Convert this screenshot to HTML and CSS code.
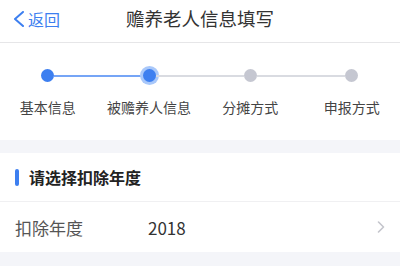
FILE: index.html
```html
<!DOCTYPE html>
<html lang="zh">
<head>
<meta charset="utf-8">
<title>赡养老人信息填写</title>
<link rel="stylesheet" href="styles.css">
</head>
<body>
<div class="page">
  <header class="navbar">
    <div class="back">
      <svg class="back-icon" width="12" height="16" viewBox="0 0 12 16"><polyline points="10,1 2,8 10,15" fill="none" stroke="#3d7ff0" stroke-width="2" stroke-linecap="round" stroke-linejoin="round"/></svg>
      <span>返回</span>
    </div>
    <div class="title">赡养老人信息填写</div>
  </header>

  <section class="steps">
    <div class="step">
      <div class="rail"><i class="seg none"></i><b class="dot active"></b><i class="seg blue"></i></div>
      <div class="label">基本信息</div>
    </div>
    <div class="step">
      <div class="rail"><i class="seg blue"></i><b class="dot current"></b><i class="seg gray"></i></div>
      <div class="label">被赡养人信息</div>
    </div>
    <div class="step">
      <div class="rail"><i class="seg gray"></i><b class="dot"></b><i class="seg gray"></i></div>
      <div class="label">分摊方式</div>
    </div>
    <div class="step">
      <div class="rail"><i class="seg gray"></i><b class="dot"></b><i class="seg none"></i></div>
      <div class="label">申报方式</div>
    </div>
  </section>

  <div class="gap"></div>

  <section class="card">
    <div class="card-title"><span class="bar"></span>请选择扣除年度</div>
    <div class="row">
      <span class="row-label">扣除年度</span>
      <span class="row-value">2018</span>
      <svg class="chev" width="8" height="12" viewBox="0 0 8 12"><polyline points="1.5,1 6.5,6 1.5,11" fill="none" stroke="#c4c5cc" stroke-width="1.6" stroke-linecap="round" stroke-linejoin="round"/></svg>
    </div>
  </section>

  <div class="gap bottom"></div>
</div>
</body>
</html>
```

FILE: styles.css
```css
* { box-sizing: border-box; margin: 0; padding: 0; }
html, body { width: 400px; height: 266px; overflow: hidden; background: #f4f5f9; }
body { font-family: "Noto Sans CJK SC", "Noto Sans", sans-serif; color: #333; }
.page { display: flex; flex-direction: column; }

.navbar {
  height: 43px;
  background: #fff;
  border-bottom: 1px solid #e6e6e8;
  display: flex;
  align-items: center;
  position: relative;
}
.back {
  display: flex;
  align-items: center;
  gap: 3px;
  padding-left: 13px;
  margin-top: -5px;
  color: #3d7ff0;
  font-size: 16px;
  line-height: 20px;
  z-index: 1;
}
.back-icon { display: block; }
.title {
  position: absolute;
  left: 0; right: 0; top: 0;
  height: 42px;
  line-height: 37px;
  text-align: center;
  font-size: 18.5px;
  color: #333;
}

.steps {
  background: #fff;
  height: 97px;
  display: grid;
  grid-template-columns: repeat(4, 101.33px);
  margin-left: -3px;
  padding-top: 26px;
  width: 406px;
}
.step { display: flex; flex-direction: column; align-items: center; }
.rail { display: flex; align-items: center; width: 100%; height: 13px; }
.seg { flex: 1; height: 2px; display: block; }
.seg.blue { background: #76a5f6; }
.seg.gray { background: #d9dbe1; }
.seg.none { background: transparent; }
.dot {
  display: block;
  width: 13px; height: 13px;
  border-radius: 50%;
  background: #c5c7d1;
  flex: none;
}
.dot.active { background: #3d7ff0; }
.dot.current { background: #3d7ff0; box-shadow: 0 0 0 3px #a9c8fa; }
.label {
  margin-top: 15px;
  font-size: 14px;
  line-height: 20px;
  color: #444;
  white-space: nowrap;
}

.gap { height: 13px; background: #f4f5f9; }

.card { background: #fff; }
.card-title {
  height: 49px;
  display: flex;
  align-items: center;
  padding-left: 15px;
  font-size: 16px;
  font-weight: bold;
  color: #222;
  border-bottom: 1px solid #f0f0f2;
}
.bar {
  width: 4px; height: 17px;
  border-radius: 2px;
  background: #3d7ff0;
  margin-right: 10px;
}
.row {
  height: 50px;
  display: flex;
  align-items: center;
  padding: 0 15px 0 15px;
}
.row-label { font-size: 17px; color: #555; width: 133px; }
.row-value { font-size: 17px; color: #333; flex: 1; }
.chev { display: block; margin-right: 0; }
```
